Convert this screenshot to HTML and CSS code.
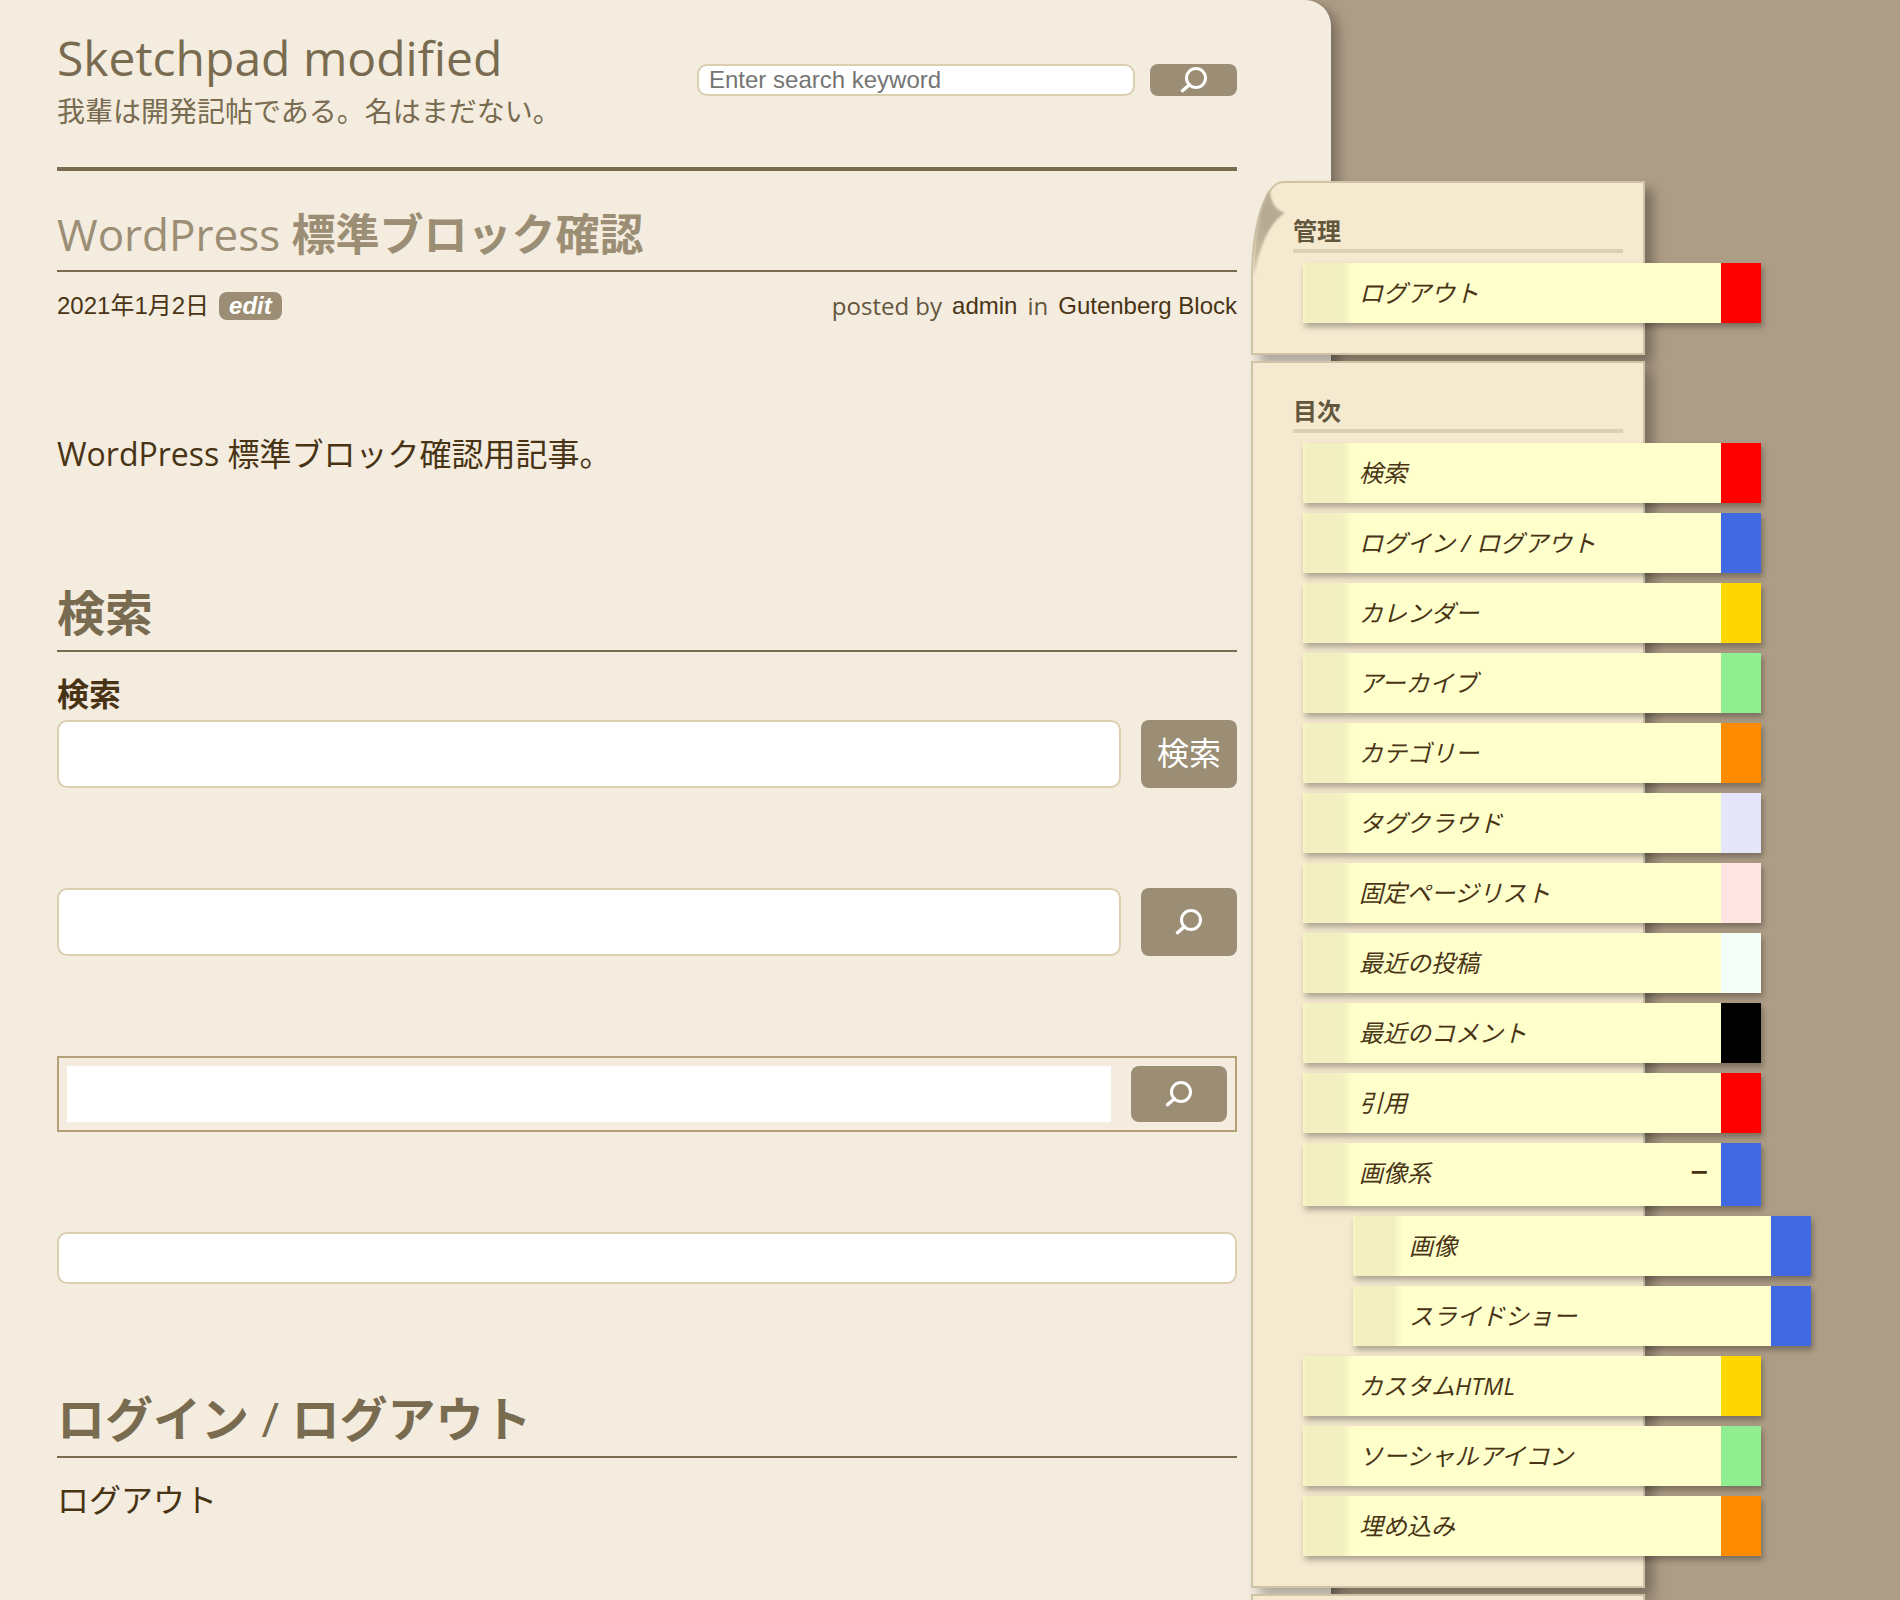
FILE: index.html
```html
<!DOCTYPE html>
<html lang="ja">
<head>
<meta charset="utf-8">
<meta name="viewport" content="width=device-width, initial-scale=1">
<title>WordPress 標準ブロック確認 | Sketchpad modified</title>
<link rel="stylesheet" href="styles.css">
</head>
<body>
<svg class="defs" width="0" height="0" aria-hidden="true">
  <symbol id="search" viewBox="0 0 28 26">
    <circle cx="16" cy="11" r="9.5" fill="none" stroke="currentColor" stroke-width="3"/>
    <path d="M9.3 17.7 L2.5 23.7" fill="none" stroke="currentColor" stroke-width="3.4" stroke-linecap="round"/>
  </symbol>
</svg>
<div class="page">
  <div class="paper">
    <header class="site-header">
      <div>
        <h1 class="site-title"><a href="#">Sketchpad modified</a></h1>
        <p class="tagline">我輩は開発記帖である。名はまだない。</p>
      </div>
      <form class="site-search">
        <input class="field" type="search" placeholder="Enter search keyword" aria-label="Enter search keyword">
        <button class="button" type="button" aria-label="検索"><svg class="icon"><use href="#search"/></svg></button>
      </form>
    </header>
    <main>
      <article>
        <h2 class="post-title"><a href="#"><span class="latin">WordPress</span> 標準ブロック確認</a></h2>
        <div class="meta">
          <div class="meta-left"><a href="#">2021年1月2日</a><a class="edit" href="#">edit</a></div>
          <div class="meta-right"><span>posted by</span><a href="#">admin</a><span>in</span><a href="#">Gutenberg Block</a></div>
        </div>
        <p class="lead">WordPress 標準ブロック確認用記事。</p>

        <h2 class="section-title">検索</h2>
        <form class="search-block">
          <label class="label" for="s1">検索</label>
          <div class="row">
            <input class="field" id="s1" type="search">
            <button class="button labelled" type="button">検索</button>
          </div>
        </form>
        <form class="search-block row">
          <input class="field" type="search" aria-label="検索">
          <button class="button" type="button" aria-label="検索"><svg class="icon"><use href="#search"/></svg></button>
        </form>
        <form class="search-block row framed">
          <input class="field" type="search" aria-label="検索">
          <button class="button" type="button" aria-label="検索"><svg class="icon"><use href="#search"/></svg></button>
        </form>
        <form class="search-block row compact">
          <input class="field" type="search" aria-label="検索">
        </form>

        <h2 class="section-title">ログイン <span class="latin">/</span> ログアウト</h2>
        <p class="text"><a href="#">ログアウト</a></p>
      </article>
    </main>
  </div>
  <aside class="sidebar">
    <section class="card curled">
      <svg class="curl" viewBox="0 0 40 104" aria-hidden="true">
        <defs>
          <linearGradient id="fold" x1="1" y1="0" x2="0" y2="1">
            <stop offset="0" stop-color="#b9ae96"/>
            <stop offset="0.5" stop-color="#b5aa91"/>
            <stop offset="1" stop-color="#cfc4a8"/>
          </linearGradient>
          <filter id="soft"><feGaussianBlur stdDeviation="0.8"/></filter>
        </defs>
        <path d="M17 7 C17 18 22 27 32 30 C18 38 6 62 1 94 C0 56 6 24 17 7 Z" fill="url(#fold)" filter="url(#soft)"/>
      </svg>
      <h3 class="card-title">管理</h3>
      <ul class="notes">
        <li><a class="note red" href="#">ログアウト</a></li>
      </ul>
    </section>
    <nav class="card">
      <h3 class="card-title">目次</h3>
      <ul class="notes">
        <li><a class="note red" href="#">検索</a></li>
        <li><a class="note blue" href="#">ログイン / ログアウト</a></li>
        <li><a class="note gold" href="#">カレンダー</a></li>
        <li><a class="note green" href="#">アーカイブ</a></li>
        <li><a class="note orange" href="#">カテゴリー</a></li>
        <li><a class="note lavender" href="#">タグクラウド</a></li>
        <li><a class="note rose" href="#">固定ページリスト</a></li>
        <li><a class="note mint" href="#">最近の投稿</a></li>
        <li><a class="note black" href="#">最近のコメント</a></li>
        <li><a class="note red" href="#">引用</a></li>
        <li>
          <a class="note blue parent" href="#">画像系<span class="toggle">−</span></a>
          <ul class="notes nested">
            <li><a class="note blue" href="#">画像</a></li>
            <li><a class="note blue" href="#">スライドショー</a></li>
          </ul>
        </li>
        <li><a class="note gold" href="#">カスタムHTML</a></li>
        <li><a class="note green" href="#">ソーシャルアイコン</a></li>
        <li><a class="note orange" href="#">埋め込み</a></li>
      </ul>
    </nav>
    <section class="card next"></section>
  </aside>
</div>
</body>
</html>
```
FILE: styles.css
```css
* { box-sizing: border-box; }

body {
  margin: 0;
  background: #ae9d86;
  color: #483414;
  font-family: "Open Sans", "Noto Sans CJK JP", sans-serif;
  font-size: 32px;
  line-height: 44px;
}

h1, h2, h3, p, ul { margin: 0; padding: 0; }
ul { list-style: none; }
a { color: inherit; text-decoration: none; }
.defs { position: absolute; }

.page {
  display: flex;
  min-height: 100vh;
  overflow: hidden;
}

.paper {
  flex: 1;
  min-width: 0;
  padding: 0 94px 0 57px;
  background: #f4ecdf;
  border-top-right-radius: 26px;
  box-shadow: 6px 6px 14px rgba(0, 0, 0, 0.34);
}

/* Header */
.site-header {
  display: flex;
  justify-content: space-between;
  align-items: flex-start;
  padding: 30px 0 36px;
  border-bottom: 4px solid #786b50;
  color: #786b50;
}
.site-title {
  font-size: 48px;
  font-weight: 500;
  line-height: 55px;
}
.tagline { font-size: 28px; line-height: 40px; margin-top: 6px; }
.site-search {
  display: flex;
  gap: 15px;
  width: 540px;
  padding-top: 34px;
}

/* Form controls */
.field {
  flex: 1;
  min-width: 0;
  height: 68px;
  margin: 0;
  padding: 0 10px;
  border: 2px solid #dccfb0;
  border-radius: 10px;
  background: #fff;
  font: 32px "Liberation Sans", "Noto Sans CJK JP", sans-serif;
  appearance: none;
}
.button {
  display: flex;
  align-items: center;
  justify-content: center;
  width: 96px;
  height: 68px;
  padding: 0;
  border: 0;
  border-radius: 8px;
  background: #9b8e74;
  color: #fff;
  font: 32px "Open Sans", "Noto Sans CJK JP", sans-serif;
}
.labelled { padding-bottom: 6px; }
.icon { width: 28px; height: 26px; }
.site-search .field { height: 32px; font-size: 24px; }
.site-search .button { width: 87px; height: 32px; }

/* Article */
.latin { font-weight: 400; }
.post-title {
  padding: 34px 0 6px;
  border-bottom: 2px solid #786b50;
  color: #9b8e74;
  font-size: 44px;
  line-height: 59px;
}
.meta {
  display: flex;
  justify-content: space-between;
  padding-top: 18px;
  font: 24px/32px "Liberation Sans", "Noto Sans CJK JP", sans-serif;
}
.meta-left, .meta-right { display: flex; align-items: center; gap: 10px; }
.meta-right span { color: #62563d; font-family: "Open Sans", sans-serif; }
.edit {
  padding: 0 10px;
  border-radius: 8px;
  background: #9b8e74;
  color: #fff;
  font-style: italic;
  font-weight: 700;
  line-height: 28px;
}
.lead { padding: 110px 0 2px; }

.section-title {
  padding: 100px 0 2px;
  border-bottom: 2px solid #786b50;
  color: #786b50;
  font-size: 48px;
  line-height: 70px;
}
.search-block { margin-bottom: 100px; }
.label {
  display: block;
  padding: 20px 0 4px;
  font-weight: 700;
}
.row { display: flex; gap: 20px; }
.framed { padding: 8px; border: 2px solid #b5a178; }
.framed .field { height: 56px; border: 0; border-radius: 0; }
.framed .button { height: 56px; }
.compact { margin-bottom: 0; }
.compact .field { height: 52px; }
.text { padding-top: 20px; }

/* Sidebar */
.sidebar {
  display: flex;
  flex-direction: column;
  gap: 6px;
  width: 649px;
  margin-left: -80px;
  padding-top: 181px;
}
.card {
  position: relative;
  width: 394px;
  padding: 32px 20px 30px 40px;
  border: 2px solid #cfc3a5;
  background: #f5e9cf;
  box-shadow: 8px 8px 12px rgba(0, 0, 0, 0.3);
}
.curled { border-top-left-radius: 32px 96px; }
.curl {
  position: absolute;
  left: 0;
  top: 0;
  width: 40px;
  height: 104px;
}
.next { flex: 1; padding: 0; border-bottom: 0; }
.card-title {
  padding-bottom: 2px;
  border-bottom: 4px solid #dccfb3;
  color: #62563d;
  font-size: 24px;
  line-height: 32px;
}

/* Sticky notes */
.notes {
  display: flex;
  flex-direction: column;
  gap: 10px;
  width: 458px;
  margin: 10px 0 0 10px;
}
.nested { margin-left: 50px; }
.note {
  display: flex;
  justify-content: space-between;
  min-height: 60px;
  padding: 12px 12px 0 56px;
  border-right: 40px solid;
  background: linear-gradient(90deg, #f8f6c4 0, #f2f0c0 3px, #f2f0c0 40px, #ffc 50px) #ffc;
  box-shadow: 2px 4px 6px rgba(0, 0, 0, 0.3);
  color: #483414;
  font-size: 24px;
  font-style: italic;
  line-height: 35px;
}
.parent { min-height: 63px; }
.toggle { font-family: "DejaVu Sans", sans-serif; font-weight: 700; }
.red { border-right-color: #f00; }
.blue { border-right-color: #4169e1; }
.gold { border-right-color: #ffd700; }
.green { border-right-color: #90ee90; }
.orange { border-right-color: #ff8c00; }
.lavender { border-right-color: #e6e6fa; }
.rose { border-right-color: #ffe4e1; }
.mint { border-right-color: #f5fffa; }
.black { border-right-color: #000; }
```
